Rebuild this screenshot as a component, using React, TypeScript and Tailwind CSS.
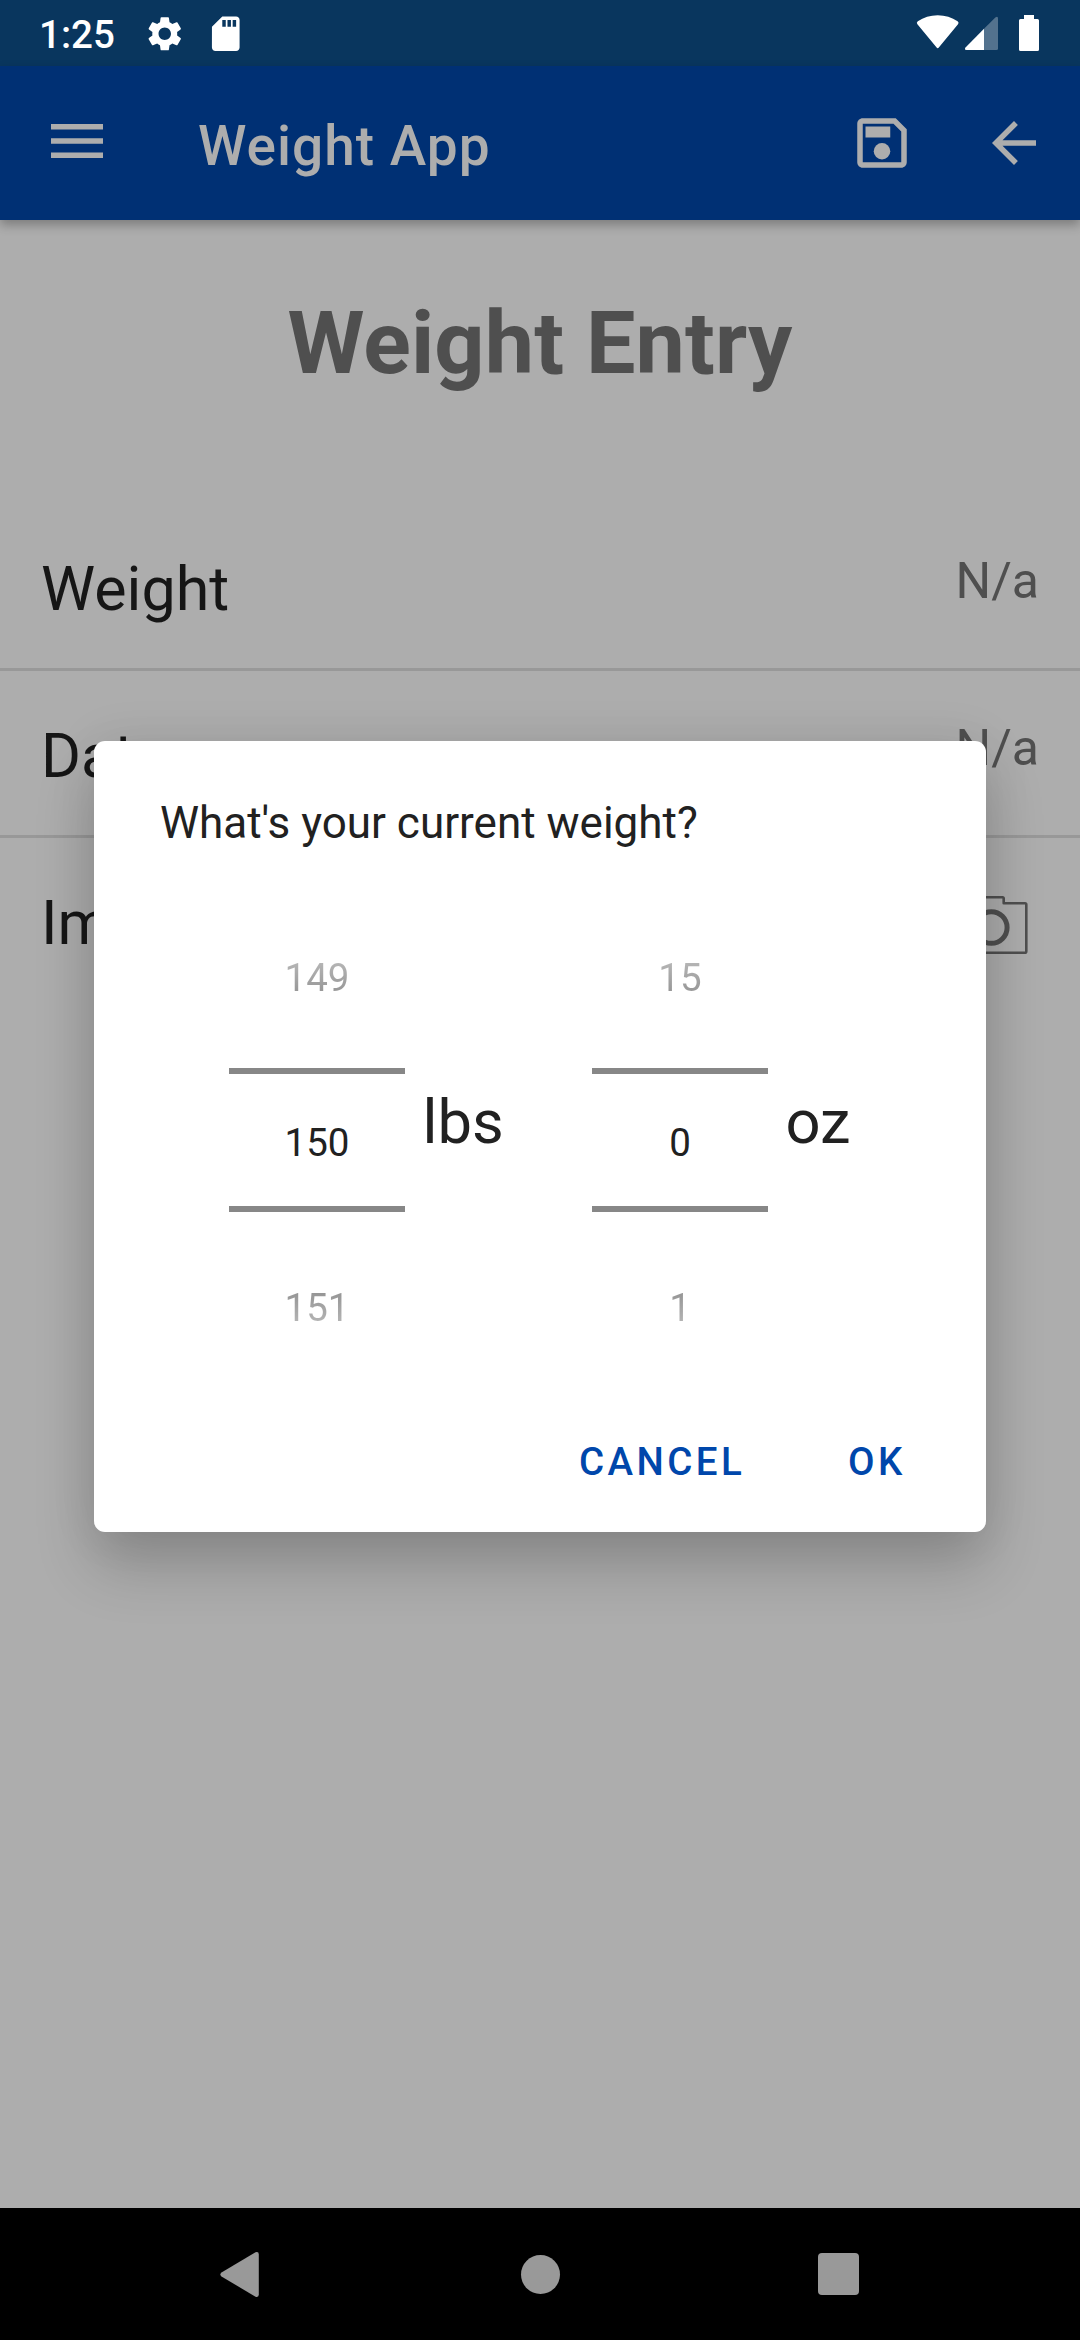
import { MdArrowBack, MdSdCard, MdSettings } from "react-icons/md";

function StatusBar() {
  return (
    <div className="flex h-[66px] items-start bg-[#09365e] pl-[39px] text-white">
      <span className="mt-[2px] w-[105px] text-[38.5px] leading-[66px] font-medium">1:25</span>
      <MdSettings className="mt-[12.5px] size-[41.5px]" />
      <MdSdCard className="mt-[12.5px] ml-[19px] size-[41.5px]" />
      <svg className="mr-[33px] ml-auto h-[66px] w-[135px] shrink-0" viewBox="912 0 135 66" fill="currentColor">
        <path d="M917.4 24.2Q916 22.7 917.8 21.3Q926.500 15.300 937.700 15.300Q948.900 15.300 957.600 21.300Q959.400 22.700 958 24.200L939 47.300Q937.700 49 936.400 47.300Z" />
        <path d="M995.600 17.200Q998 15.700 998 18.500V48.500Q998 50 996.500 50H984V28.800Z" fillOpacity="0.3" />
        <path d="M984 28.800V50H966.500Q964 50 965.500 47.500Z" />
        <path d="M1024 15h10v4h3.500q1.500 0 1.500 1.500v29q0 1.500-1.500 1.500h-17q-1.500 0-1.500-1.500v-29q0-1.500 1.500-1.500h3.500z" />
      </svg>
    </div>
  );
}

function AppBar() {
  return (
    <header className="relative flex h-[154px] items-start bg-[#003074] text-[#adadad] shadow-[0_5px_10px_rgba(0,0,0,0.28)]">
      <svg className="mt-[44px] ml-[44px] size-[66px]" viewBox="0 0 66 66" fill="currentColor">
        <path d="M7 14h52v5.500H7zM7 28.300h52v5.500H7zM7 42.600h52v5.500H7z" />
      </svg>
      <h1 className="mt-[47px] ml-[88px] text-[55px] leading-[66px] font-medium tracking-[1px]">Weight App</h1>
      <svg className="mt-[44px] mr-[66px] ml-auto size-[66px]" viewBox="0 0 24 24" fill="currentColor">
        <path
          fillRule="evenodd"
          d="M17 3H5c-1.110 0-2 .9-2 2v14c0 1.100.89 2 2 2h14c1.100 0 2-.9 2-2V7l-4-4zm2 16H5V5h11.170L19 7.830V19z"
        />
        <path d="M6 6h9v4H6z" />
        <circle cx="12" cy="15" r="3" />
      </svg>
      <MdArrowBack className="mt-[44px] mr-[33px] size-[66px]" />
    </header>
  );
}

function CameraIcon() {
  return (
    <svg className="mt-[56px] mr-[10px] h-[62px] w-[78px]" viewBox="0 0 78 62" fill="none" stroke="#4f4f4f">
      <path
        strokeWidth="2.600"
        strokeLinejoin="round"
        d="M5.300 9.300H28V4.500Q28 3.300 29.200 3.300H51.500Q52.700 3.300 52.700 4.500V9.300H74Q75.300 9.300 75.300 10.600V57.200Q75.300 58.700 74 58.700H5.300Q4 58.700 4 57.200V10.600Q4 9.300 5.300 9.300Z"
      />
      <circle cx="40.300" cy="33.500" r="15.800" strokeWidth="5" />
    </svg>
  );
}

function Row({ label, value, last }: { label: string; value?: string; last?: boolean }) {
  return (
    <div
      className={
        last
          ? "flex h-[167px] items-start justify-between pr-[41px] pl-[41px]"
          : "flex h-[167px] items-start justify-between border-b-[3px] border-[#989898] pr-[41px] pl-[41px]"
      }
    >
      <span className="mt-[49px] text-[61px] leading-[72px] text-[#161616]">{label}</span>
      {value ? (
        <span className="mt-[47px] text-[50px] leading-[60px] text-[#4f4f4f]">{value}</span>
      ) : (
        <CameraIcon />
      )}
    </div>
  );
}

function Picker({ values }: { values: [string, string, string] }) {
  const [previous, current, next] = values;
  return (
    <div className="w-[176px] text-center text-[38.5px] leading-[46px] text-[#212121]">
      <div className="mb-[67px] bg-linear-to-b from-[#bdbdbd] to-[#8e8e8e] bg-clip-text text-transparent">{previous}</div>
      <div className="h-[144px] border-y-[6px] border-[#878787] pt-[46px]">{current}</div>
      <div className="mt-[73px] bg-linear-to-b from-[#8e8e8e] to-[#bdbdbd] bg-clip-text text-transparent">{next}</div>
    </div>
  );
}

function WeightDialog() {
  return (
    <div
      role="dialog"
      className="absolute top-[741px] left-[94px] h-[791px] w-[892px] rounded-[11px] bg-white pt-[56px] shadow-[0_34px_60px_rgba(0,0,0,0.2),0_0_50px_rgba(0,0,0,0.08)]"
    >
      <h3 className="ml-[66px] text-[44px] leading-[52px] text-[#212121]">What's your current weight?</h3>
      <div className="mt-[106px] ml-[135px] flex">
        <Picker values={["149", "150", "151"]} />
        <span className="mt-[131px] w-[187px] pl-[17.5px] text-[61.5px] leading-[72px] text-[#212121]">lbs</span>
        <Picker values={["15", "0", "1"]} />
        <span className="mt-[131px] pl-[17.5px] text-[61.5px] leading-[72px] text-[#212121]">oz</span>
      </div>
      <div className="mt-[108px] ml-[485px] flex text-[38.5px] leading-[46px] font-medium tracking-[3.44px] text-[#0047ab]">
        <button className="w-[269px] text-left">CANCEL</button>
        <button>OK</button>
      </div>
    </div>
  );
}

function NavigationBar() {
  return (
    <nav className="mt-auto flex h-[132px] items-center justify-between bg-black pr-[221px] pl-[220px]">
      <svg className="size-[46px]" viewBox="0 0 46 46" fill="#999999">
        <path d="M1.500 25.500Q-.8 23.500 1.500 21.500L35.500 1.300Q38.800 .3 38.800 3.500V43.500Q38.800 46.700 35.500 45.700Z" />
      </svg>
      <div className="-ml-[2px] size-[39px] rounded-full bg-[#999999]" />
      <div className="size-[41.500px] rounded-[4px] bg-[#999999]" />
    </nav>
  );
}

export default function App() {
  return (
    <div className="relative flex h-[2340px] w-[1080px] flex-col overflow-hidden bg-[#adadad] font-['Roboto',sans-serif]">
      <StatusBar />
      <AppBar />
      <h2 className="mt-[71px] text-center text-[88px] leading-[104px] font-bold tracking-[0.1px] text-[#4f4f4f]">
        Weight Entry
      </h2>
      <div className="mt-[109px]">
        <Row label="Weight" value="N/a" />
        <Row label="Date" value="N/a" />
        <Row label="Image" last />
      </div>
      <NavigationBar />
      <WeightDialog />
    </div>
  );
}
